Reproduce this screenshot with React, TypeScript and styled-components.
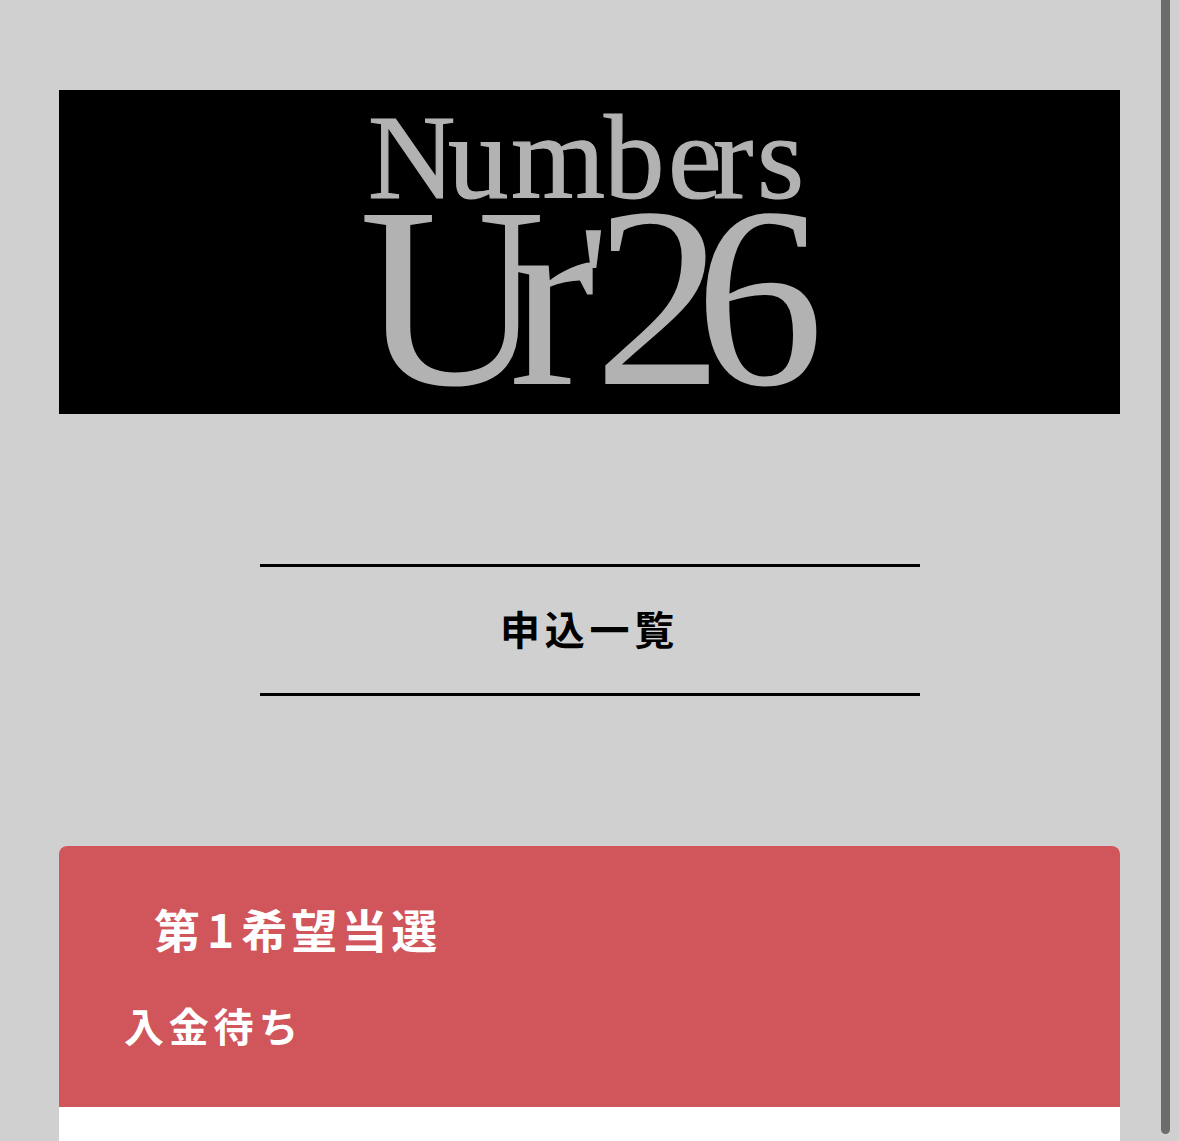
import React from "react";
import styled, { createGlobalStyle } from "styled-components";

const Global = createGlobalStyle`
  html, body { margin: 0; padding: 0; height: 1141px; overflow: hidden; background: #d0d0d0; }
  body { font-family: "Liberation Sans", "Noto Sans CJK JP", sans-serif; }
`;

const Page = styled.main`
  position: relative;
  height: 1141px;
  overflow: hidden;
  padding: 90px 59px 0;
  box-sizing: border-box;
`;

const Banner = styled.header`
  height: 324px;
  background: #000;
`;

const LogoSvg = styled.svg`
  display: block;
  width: 100%;
  height: 100%;
`;

const LogoText = styled.text<{ $weight?: number }>`
  font-family: "Liberation Serif", serif;
  fill: #b3b2b3;
  stroke: #b3b2b3;
  stroke-width: ${(p) => p.$weight ?? 0}px;
`;

const TitleBlock = styled.h1`
  width: 660px;
  height: 132px;
  margin: 150px auto 0;
  padding-bottom: 4px;
  box-sizing: border-box;
  border-top: 3px solid #000;
  border-bottom: 3px solid #000;
  display: flex;
  align-items: center;
  justify-content: center;
  font-family: "Noto Sans CJK JP", sans-serif;
  font-size: 40px;
  font-weight: 700;
  letter-spacing: 4.8px;
  color: #000;
`;

const Card = styled.section`
  margin-top: 150px;
  border-radius: 8px 8px 0 0;
  overflow: hidden;
  background: #fff;
  height: 400px;
`;

const CardHeader = styled.div`
  height: 261px;
  box-sizing: border-box;
  background: #d0565c;
  color: #fff;
  font-family: "Noto Sans CJK JP", sans-serif;
  font-weight: 700;
  padding-top: 48px;
`;

const Result = styled.div`
  font-size: 46px;
  line-height: 68px;
  letter-spacing: 4px;
  padding-left: 95px;
`;

const Digit = styled.span`
  padding: 0 3px;
`;

const Status = styled.div`
  font-size: 40px;
  line-height: 60px;
  letter-spacing: 4.8px;
  padding-left: 65px;
  margin-top: 33px;
`;

const ScrollThumb = styled.div`
  position: absolute;
  top: -10px;
  left: 1161px;
  width: 9px;
  height: 1144px;
  border-radius: 0 0 5px 5px;
  background: #6c6c6c;
`;

export default function App() {
  return (
    <Page>
      <Global />
      <Banner>
        <LogoSvg viewBox="0 0 1061 324" role="img" aria-label="Numbers Ur'26">
          <LogoText x="309 389 452 545 609 654 698" y="108" fontSize="121" $weight={1.2}>
            Numbers
          </LogoText>
          <LogoText x="300 450" y="294" fontSize="258">
            Ur
          </LogoText>
          <LogoText x="520" y="246" fontSize="160">
            '
          </LogoText>
          <LogoText x="535 636" y="294" fontSize="258">
            26
          </LogoText>
        </LogoSvg>
      </Banner>
      <TitleBlock>申込一覧</TitleBlock>
      <Card>
        <CardHeader>
          <Result>
            第<Digit>1</Digit>希望当選
          </Result>
          <Status>入金待ち</Status>
        </CardHeader>
      </Card>
      <ScrollThumb />
    </Page>
  );
}
